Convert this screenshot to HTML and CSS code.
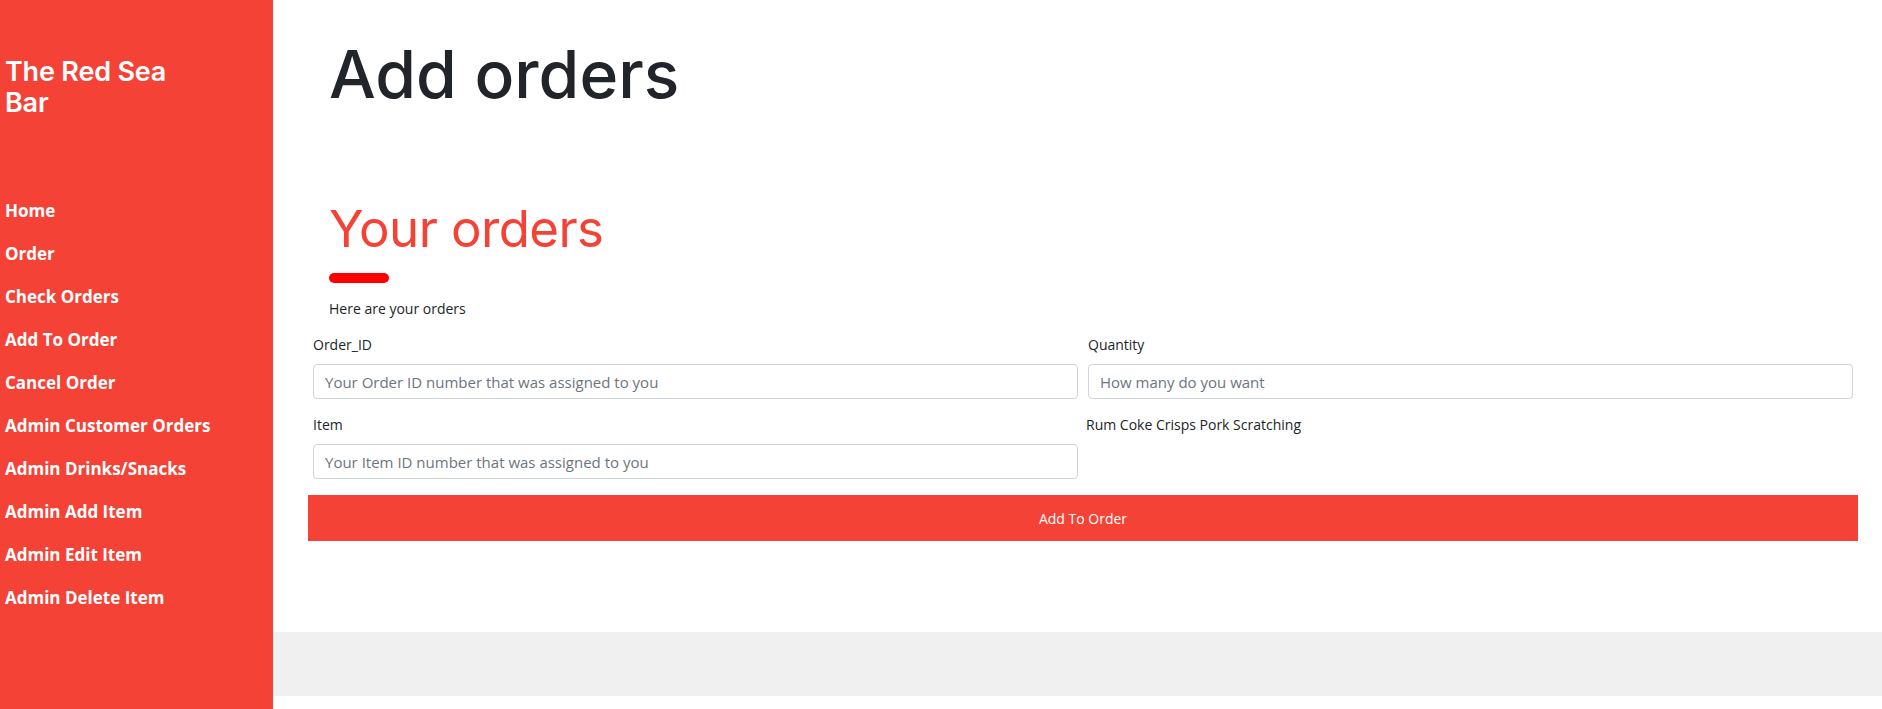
FILE: index.html
```html
<!DOCTYPE html>
<html lang="en">
<head>
<meta charset="utf-8">
<title>Add orders</title>
<link rel="stylesheet" href="styles.css">
</head>
<body>
<div class="layout">
  <aside class="sidebar">
    <div class="brand">The Red Sea Bar</div>
    <nav class="nav">
      <a href="#">Home</a>
      <a href="#">Order</a>
      <a href="#">Check Orders</a>
      <a href="#">Add To Order</a>
      <a href="#">Cancel Order</a>
      <a href="#">Admin Customer Orders</a>
      <a href="#">Admin Drinks/Snacks</a>
      <a href="#">Admin Add Item</a>
      <a href="#">Admin Edit Item</a>
      <a href="#">Admin Delete Item</a>
    </nav>
  </aside>
  <main class="main">
    <div class="content">
      <h1 class="page-title">Add orders</h1>
      <section class="orders">
        <h2 class="section-title">Your orders</h2>
        <div class="underline"></div>
        <p class="intro">Here are your orders</p>
        <form class="order-form">
          <div class="form-grid">
            <div class="field">
              <label class="label" for="oid">Order_ID</label>
              <input class="input" id="oid" type="text" placeholder="Your Order ID number that was assigned to you">
            </div>
            <div class="field">
              <label class="label" for="qty">Quantity</label>
              <input class="input" id="qty" type="text" placeholder="How many do you want">
            </div>
            <div class="field">
              <label class="label" for="item">Item</label>
              <input class="input" id="item" type="text" placeholder="Your Item ID number that was assigned to you">
            </div>
            <div class="field field-list">
              <span class="label items-list">Rum Coke Crisps Pork Scratching</span>
            </div>
          </div>
          <button class="submit" type="button">Add To Order</button>
        </form>
      </section>
    </div>
    <footer class="footer"></footer>
  </main>
</div>
</body>
</html>
```

FILE: styles.css
```css
html, body {
  margin: 0;
  padding: 0;
  background: #ffffff;
}

body {
  font-family: "Open Sans", "Noto Sans", sans-serif;
  color: #212529;
}

.layout {
  display: flex;
  min-height: 709px;
}

.sidebar {
  width: 273px;
  flex: 0 0 273px;
  background: #f44336;
  color: #ffffff;
  box-sizing: border-box;
  padding: 56px 0 0 5px;
}

.brand {
  font-family: "Inter", "Lato", sans-serif;
  font-weight: 600;
  font-size: 27px;
  line-height: 31px;
  letter-spacing: -0.2px;
  width: 175px;
}

.nav {
  display: flex;
  flex-direction: column;
  margin-top: 71px;
}

.nav a {
  color: #ffffff;
  text-decoration: none;
  font-family: "Open Sans", sans-serif;
  font-weight: 700;
  font-size: 17px;
  line-height: 43px;
  letter-spacing: 0;
}

.main {
  flex: 1;
  display: flex;
  flex-direction: column;
  padding-bottom: 13px;
}

.content {
  flex: 1;
  padding: 0 24px 0 35px;
}

.page-title {
  margin: 0;
  padding: 34px 0 0 21px;
  font-family: "Inter", "Lato", sans-serif;
  font-weight: 500;
  font-size: 66px;
  line-height: 80px;
  letter-spacing: 0;
  color: #212529;
}

.orders {
  margin-top: 84px;
}

.section-title {
  margin: 0;
  padding-left: 21px;
  font-family: "Inter", "Lato", sans-serif;
  font-weight: 400;
  font-size: 51px;
  line-height: 62px;
  letter-spacing: -0.6px;
  color: #f44336;
}

.underline {
  width: 60px;
  height: 10px;
  border-radius: 5px;
  background: #ff0000;
  margin: 13px 0 0 21px;
}

.intro {
  margin: 16px 0 0 21px;
  font-size: 14px;
  line-height: 20px;
  color: #212529;
}

.order-form {
  margin-top: 16px;
}

.form-grid {
  display: grid;
  grid-template-columns: 1fr 1fr;
  column-gap: 10px;
  row-gap: 16px;
  padding: 0 5px;
}

.field {
  display: flex;
  flex-direction: column;
}

.label {
  font-size: 14px;
  line-height: 20px;
  margin-bottom: 9px;
  color: #212529;
}

.field-list .items-list {
  margin-left: -2px;
}

.input {
  height: 35px;
  box-sizing: border-box;
  border: 1px solid #ced4da;
  border-radius: 4px;
  padding: 6px 11px;
  font-family: "Open Sans", sans-serif;
  font-size: 15px;
  color: #495057;
  background: #fff;
}

.input::placeholder {
  color: #6c757d;
}

.submit {
  display: block;
  width: 100%;
  height: 46px;
  margin-top: 16px;
  border: none;
  background: #f44336;
  color: #ffffff;
  font-family: "Open Sans", sans-serif;
  font-size: 14px;
}

.footer {
  height: 64px;
  background: #f0f0f0;
  margin-top: 0;
}
```
